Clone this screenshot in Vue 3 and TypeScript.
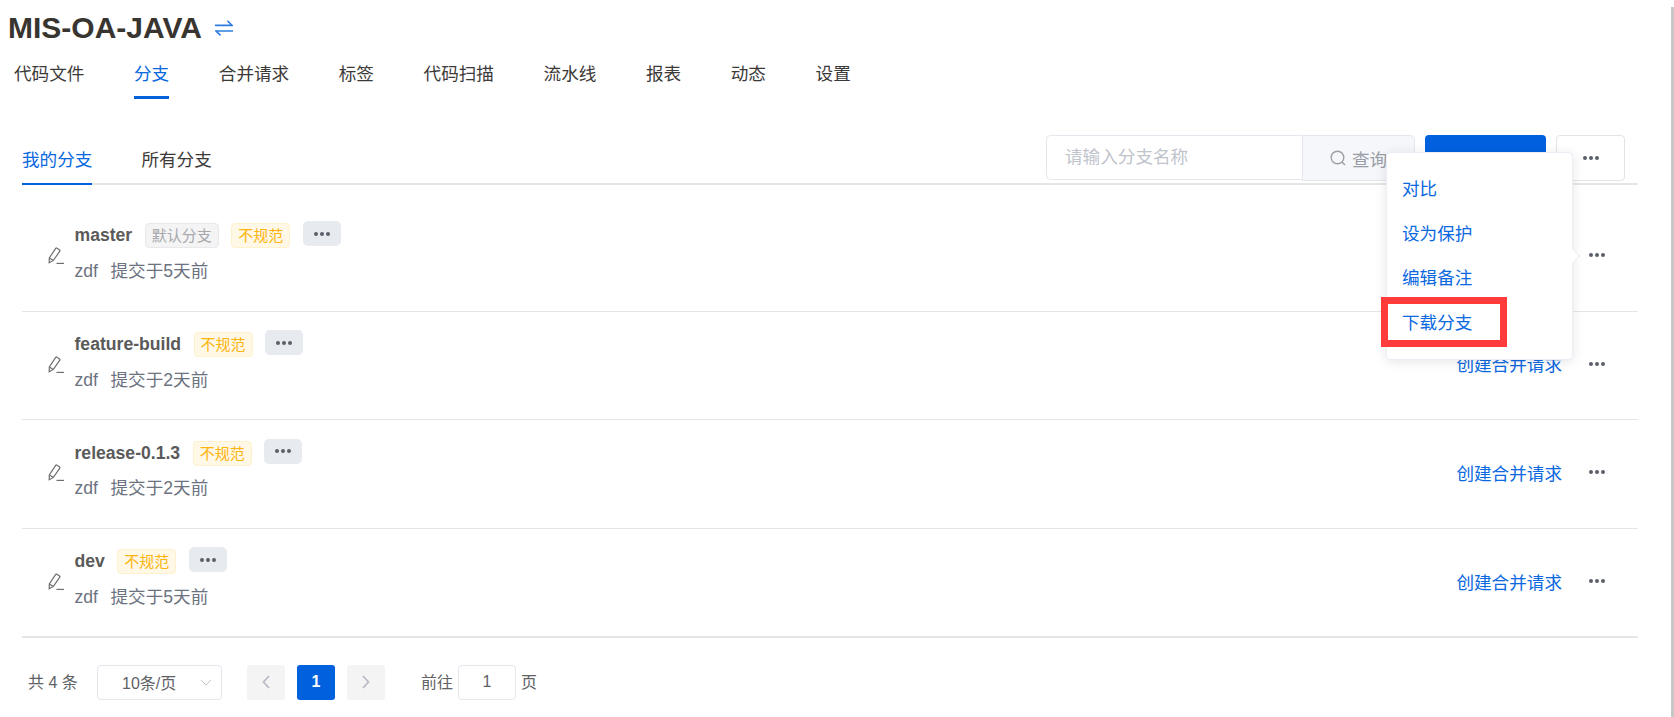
<script setup lang="ts">
const navItems: string[] = ['代码文件', '分支', '合并请求', '标签', '代码扫描', '流水线', '报表', '动态', '设置']
const popItems: string[] = ['对比', '设为保护', '编辑备注', '下载分支']
interface Branch { name: string; isDefault: boolean; when: string }
const branches: Branch[] = [
  { name: 'master', isDefault: true, when: '提交于5天前' },
  { name: 'feature-build', isDefault: false, when: '提交于2天前' },
  { name: 'release-0.1.3', isDefault: false, when: '提交于2天前' },
  { name: 'dev', isDefault: false, when: '提交于5天前' },
]
</script>

<template>
  <div class="page">
    <div class="title-row">
      <h1 class="title">MIS-OA-JAVA</h1>
      <svg class="swap" viewBox="0 0 18 16" fill="none" stroke="currentColor" stroke-width="1.6">
        <path d="M0 5.4H17L12.4 .8" />
        <path d="M18 11H1L5.6 15.4" />
      </svg>
    </div>

    <nav class="nav">
      <a v-for="(item, i) in navItems" :key="item" class="nav-item" :class="{ active: i === 1 }">{{ item }}</a>
    </nav>

    <div class="toolbar">
      <div class="tabs">
        <a class="tab active">我的分支</a>
        <a class="tab">所有分支</a>
      </div>
      <div class="actions">
        <div class="search">
          <input class="search-input" placeholder="请输入分支名称" />
          <button class="search-btn">
            <svg class="search-icon" viewBox="0 0 16 16" fill="none" stroke="currentColor" stroke-width="1.4">
              <circle cx="7.5" cy="7.5" r="6.3" />
              <path d="M12 12l3 3" />
            </svg>
            查询
          </button>
        </div>
        <button class="primary"></button>
        <button class="more">
          <svg class="dots" viewBox="0 0 16 4" fill="currentColor"><circle cx="2" cy="2" r="2" /><circle cx="8" cy="2" r="2" /><circle cx="14" cy="2" r="2" /></svg>
        </button>
      </div>
    </div>

    <div class="list">
      <div v-for="b in branches" :key="b.name" class="row">
        <svg class="pencil" viewBox="0 0 16 18" fill="none" stroke="#6f6f6f" stroke-width="1.2">
          <path d="M1.2 15.8L1.3 11 7.7 1.3Q8.2.7 9 1.2L11.6 3Q12.2 3.5 11.8 4.2L5.4 13.4Z" />
          <path d="M1.3 11L5.4 13.4" />
          <path d="M8.5 16.4H16" />
        </svg>
        <div class="info">
          <div class="name-line">
            <span class="name">{{ b.name }}</span>
            <span v-if="b.isDefault" class="tag tag-gray">默认分支</span>
            <span class="tag tag-warn">不规范</span>
            <button class="dots-btn">
              <svg class="dots" viewBox="0 0 16 4" fill="currentColor"><circle cx="2" cy="2" r="2" /><circle cx="8" cy="2" r="2" /><circle cx="14" cy="2" r="2" /></svg>
            </button>
          </div>
          <div class="sub-line"><span class="author">zdf</span><span>{{ b.when }}</span></div>
        </div>
        <a class="merge-link">创建合并请求</a>
        <svg class="dots row-dots" viewBox="0 0 16 4" fill="currentColor"><circle cx="2" cy="2" r="2" /><circle cx="8" cy="2" r="2" /><circle cx="14" cy="2" r="2" /></svg>
      </div>
    </div>

    <div class="pager">
      <span class="total">共 4 条</span>
      <div class="size-select">
        <span>10条/页</span>
        <svg class="chevron" viewBox="0 0 12 7" fill="none" stroke="currentColor" stroke-width="1"><path d="M1 1l5 5 5-5" /></svg>
      </div>
      <button class="page-btn prev">
        <svg class="arrow-icon" viewBox="0 0 8 14" fill="none" stroke="currentColor" stroke-width="1.8"><path d="M7 1L1.5 7 7 13" /></svg>
      </button>
      <button class="page-btn current">1</button>
      <button class="page-btn next">
        <svg class="arrow-icon" viewBox="0 0 8 14" fill="none" stroke="currentColor" stroke-width="1.8"><path d="M1 1l5.5 6L1 13" /></svg>
      </button>
      <span class="jump-label">前往</span>
      <input class="jump-input" value="1" />
      <span class="jump-unit">页</span>
    </div>

    <div class="popover">
      <span class="pop-arrow"></span>
      <a v-for="p in popItems" :key="p" class="pop-item">{{ p }}</a>
    </div>
    <div class="highlight"></div>
    <div class="scrollbar"></div>
  </div>
</template>

<style scoped>
.page {
  position: relative;
  height: 717px;
  overflow: hidden;
  background: #fff;
  color: #3c3a38;
  font-family: "Liberation Sans", "Noto Sans CJK SC", sans-serif;
  font-size: 17.6px;
}
.title-row {
  display: flex;
  align-items: center;
  height: 56px;
  padding-left: 8px;
}
.title {
  margin: 0;
  font-size: 30px;
  font-weight: 700;
  line-height: 56px;
  color: #38342f;
}
.swap {
  width: 18px;
  height: 16px;
  margin-left: 13px;
  color: #2f7de1;
}
.nav {
  display: flex;
  gap: 49.6px;
  height: 43px;
  padding-left: 14px;
}
.nav-item {
  box-sizing: border-box;
  height: 43px;
  line-height: 37px;
}
.nav-item.active {
  color: #0a68e0;
  border-bottom: 3px solid #0061df;
}
.toolbar {
  box-sizing: border-box;
  display: flex;
  justify-content: space-between;
  align-items: flex-start;
  height: 86px;
  margin: 0 36px 0 22px;
  padding: 36px 13px 0 0;
  border-bottom: 2px solid #e6e6e6;
}
.tabs {
  display: flex;
  gap: 49px;
}
.tab {
  box-sizing: border-box;
  height: 50px;
  line-height: 50px;
}
.tab.active {
  color: #0a68e0;
  border-bottom: 2px solid #0061df;
}
.actions {
  display: flex;
  align-items: flex-start;
}
.search {
  display: flex;
  width: 369px;
  height: 45px;
}
.search-input {
  box-sizing: border-box;
  width: 256px;
  height: 45px;
  padding: 0 18px;
  border: 1px solid #e4e7ed;
  border-right: 0;
  border-radius: 5px 0 0 5px;
  outline: none;
  font: inherit;
}
.search-input::placeholder {
  color: #c0c4cc;
}
.search-btn {
  box-sizing: border-box;
  display: flex;
  align-items: center;
  width: 113px;
  height: 46px;
  padding: 0 0 0 27px;
  border: 1px solid #e4e7ed;
  border-radius: 0 5px 5px 0;
  background: #f5f7fa;
  color: #9a9ea6;
  font: inherit;
}
.search-icon {
  width: 16px;
  height: 16px;
  margin-right: 6px;
}
.primary {
  width: 121px;
  height: 45px;
  margin-left: 10px;
  border: 0;
  border-radius: 4px;
  background: #0061df;
}
.more {
  box-sizing: border-box;
  display: flex;
  align-items: center;
  justify-content: center;
  width: 69px;
  height: 46px;
  margin-left: 10px;
  border: 1px solid #e4e4e4;
  border-radius: 4px;
  background: #fff;
  color: #5a5f6a;
}
.dots {
  width: 16px;
  height: 4px;
}
.list {
  margin: 18px 36px 0 22px;
  border-bottom: 1px solid #e6e6e6;
}
.row {
  box-sizing: border-box;
  display: flex;
  align-items: center;
  height: 108.6px;
  padding: 0 33px 3px 26px;
  border-bottom: 1px solid #e6e6e6;
}
.pencil {
  flex: none;
  width: 16px;
  height: 18px;
  margin: 2px 10.5px 0 0;
}
.info {
  flex: 1;
  padding-bottom: 6px;
}
.name-line {
  display: flex;
  align-items: flex-start;
  height: 28px;
}
.name {
  font-weight: 700;
  line-height: 28px;
  color: #5a5a5a;
}
.tag {
  box-sizing: border-box;
  height: 25px;
  margin: 2px 0 0 12.5px;
  padding: 0 6px;
  border: 1px solid;
  border-radius: 4px;
  font-size: 15px;
  line-height: 23px;
}
.tag-gray {
  background: #f4f4f5;
  border-color: #e9e9eb;
  color: #a5a7ab;
}
.tag-warn {
  background: #fff8e6;
  border-color: #fff1cc;
  color: #fdb40f;
}
.dots-btn {
  display: flex;
  align-items: center;
  justify-content: center;
  width: 38px;
  height: 25px;
  margin-left: 12.5px;
  padding: 0;
  border: 0;
  border-radius: 5px;
  background: #e7eaef;
  color: #5a5f6a;
}
.sub-line {
  display: flex;
  margin-top: 9.7px;
  line-height: 24px;
  color: #6b7280;
}
.author {
  margin-right: 12.5px;
}
.merge-link {
  color: #0a68e0;
}
.row-dots {
  margin-left: 27px;
  color: #5a5f6a;
}
.pager {
  display: flex;
  align-items: center;
  height: 35px;
  margin: 26.5px 0 0 28px;
  font-size: 16px;
  color: #606266;
}
.total {
  width: 69px;
  margin-top: -2px;
}
.size-select {
  box-sizing: border-box;
  position: relative;
  display: flex;
  align-items: center;
  width: 125px;
  height: 35px;
  padding-left: 24px;
  border: 1px solid #e4e7ed;
  border-radius: 4px;
}
.chevron {
  position: absolute;
  right: 9px;
  top: 13px;
  width: 12px;
  height: 7px;
  color: #c0c4cc;
}
.page-btn {
  display: flex;
  align-items: center;
  justify-content: center;
  width: 38px;
  height: 35px;
  padding: 0;
  border: 0;
  border-radius: 3px;
  background: #f4f4f5;
  color: #b9bcc4;
  font: inherit;
}
.prev {
  margin-left: 25px;
}
.current {
  margin-left: 12px;
  background: #0061df;
  color: #fff;
  font-weight: 700;
}
.next {
  margin-left: 12px;
}
.arrow-icon {
  width: 8px;
  height: 14px;
}
.jump-label {
  margin-left: 36px;
  margin-top: -2px;
}
.jump-input {
  box-sizing: border-box;
  width: 58px;
  height: 35px;
  margin-left: 5px;
  border: 1px solid #e4e7ed;
  border-radius: 4px;
  outline: none;
  text-align: center;
  color: #606266;
  font: inherit;
}
.jump-unit {
  margin-left: 5px;
  margin-top: -2px;
}
.popover {
  box-sizing: border-box;
  position: absolute;
  left: 1386px;
  top: 152px;
  display: flex;
  flex-direction: column;
  width: 187px;
  height: 208px;
  padding: 14px 0 0 15px;
  border: 1px solid #ebeef5;
  border-radius: 4px;
  background: #fff;
  box-shadow: 0 2px 12px rgba(0, 0, 0, 0.1);
}
.pop-arrow {
  position: absolute;
  right: -6px;
  top: 98px;
  width: 9px;
  height: 9px;
  background: #fff;
  border-top: 1px solid #ebeef5;
  border-right: 1px solid #ebeef5;
  transform: rotate(45deg);
}
.pop-item {
  height: 44.5px;
  line-height: 44.5px;
  color: #0a68e0;
}
.highlight {
  box-sizing: border-box;
  position: absolute;
  left: 1381px;
  top: 297px;
  width: 126px;
  height: 50px;
  border: 7px solid #ff3b3b;
}
.scrollbar {
  position: absolute;
  right: 0;
  top: 7px;
  bottom: 0;
  width: 3px;
  background: #c6c6c6;
}
</style>
